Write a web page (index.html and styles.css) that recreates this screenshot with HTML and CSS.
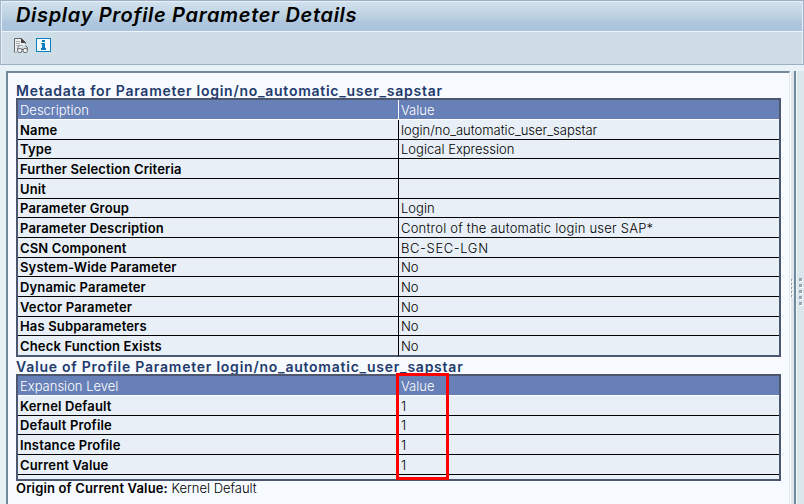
FILE: index.html
```html
<!DOCTYPE html>
<html lang="en">
<head>
<meta charset="utf-8">
<title>Display Profile Parameter Details</title>
<link rel="stylesheet" href="styles.css">
</head>
<body>
<header class="top">
  <h1 class="title">Display Profile Parameter Details</h1>
  <div class="toolbar">
    <svg class="ic-doc" width="15" height="16" viewBox="0 0 15 16" fill="none" stroke="#666">
      <path d="M.5 14.500V.5H7.500L11.500 4.500V6" fill="#edf1f4"/>
      <path d="M7 0v5h5z" fill="#444" stroke="none"/>
      <path d="M2 3.500h4M2 5.500h4M2 7.500h7M0 14.500h3" stroke="#aaa"/>
      <path d="M3.700 12V9.500L5.500 7.800M13.300 12V9L11.500 7.800M8 11.500h1"/>
      <circle cx="5.800" cy="12.500" r="2.200" fill="#f4f6f7"/>
      <circle cx="11.200" cy="12.500" r="2.200" fill="#f4f6f7"/>
    </svg>
    <svg class="ic-info" width="15" height="14" viewBox="0 0 15 14" shape-rendering="crispEdges">
      <rect width="15" height="14" fill="#0a7fc2"/>
      <rect x="1" y="1" width="13" height="12" fill="#f7fbfe"/>
      <path d="M6 2h3v2H6zM5 5h4v5h1v2H5v-2h1V6H5z" fill="#0a7fc2"/>
    </svg>
  </div>
</header>
<div class="work">
  <main class="panel">
    <h2 class="h-meta">Metadata for Parameter login/no_automatic_user_sapstar</h2>
    <div class="table">
      <div class="row head"><span>Description</span><span>Value</span></div>
      <div class="row"><b>Name</b><span>login/no_automatic_user_sapstar</span></div>
      <div class="row short"><b>Type</b><span>Logical Expression</span></div>
      <div class="row"><b>Further Selection Criteria</b><span></span></div>
      <div class="row"><b>Unit</b><span></span></div>
      <div class="row short"><b>Parameter Group</b><span>Login</span></div>
      <div class="row"><b>Parameter Description</b><span class="sentence">Control of the automatic login user SAP*</span></div>
      <div class="row"><b>CSN Component</b><span class="code">BC-SEC-LGN</span></div>
      <div class="row short"><b>System-Wide Parameter</b><span>No</span></div>
      <div class="row"><b>Dynamic Parameter</b><span>No</span></div>
      <div class="row"><b>Vector Parameter</b><span>No</span></div>
      <div class="row short"><b>Has Subparameters</b><span>No</span></div>
      <div class="row last"><b>Check Function Exists</b><span>No</span></div>
    </div>
    <h2 class="h-value">Value of Profile Parameter login/no_automatic_user_sapstar</h2>
    <div class="table values">
      <div class="row head"><span>Expansion Level</span><span>Value</span></div>
      <div class="row"><b>Kernel Default</b><span>1</span></div>
      <div class="row short"><b>Default Profile</b><span>1</span></div>
      <div class="row"><b>Instance Profile</b><span>1</span></div>
      <div class="row"><b>Current Value</b><span>1</span></div>
      <div class="row stub"><b></b><span></span></div>
      <div class="mark"></div>
    </div>
    <p class="origin"><b>Origin of Current Value:</b> <span>Kernel Default</span></p>
  </main>
  <div class="splitter"><i></i><i></i><i></i><i></i><i></i></div>
  <div class="edge"><i></i><i></i><i></i><i></i><i></i></div>
</div>
</body>
</html>
```
FILE: styles.css
```css
* { box-sizing: border-box; }
body {
  margin: 0;
  width: 804px;
  height: 504px;
  overflow: hidden;
  display: flex;
  flex-direction: column;
  background: #e8f1f6;
  color: #000;
  font: 300 13px/16px Inter, "Liberation Sans", Arial, sans-serif;
}
h1, h2, p { margin: 0; }

.top {
  height: 65px;
  border: 1px solid #9dafc5;
  border-left-color: #a5b7cc;
  box-shadow: inset 1px 1px #e8f0f6, inset -1px 0 #e8f0f6;
  background: #cfdde7;
}
.title {
  height: 31px;
  margin: 0 1px;
  padding: 2px 0 0 14px;
  border-top: 1px solid #e8f0f6;
  border-bottom: 1px solid #edf4f9;
  background: linear-gradient(#d2e1ee, #b5cddd 62%, #aec6df 66%, #abc3dc);
  font: italic 600 20px/23px Inter, "Liberation Sans", Arial, sans-serif;
  letter-spacing: .68px;
  white-space: nowrap;
}
.toolbar {
  display: flex;
  gap: 7px;
  padding: 6px 0 0 13px;
}

.work {
  flex: 1;
  display: flex;
  padding: 6px 0 0 6px;
}
.panel {
  width: 784px;
  padding: 11px 0 0 8px;
  border: solid;
  border-width: 2px 1px 0 2px;
  border-color: #71899b #e0e7eb #71899b #71899b;
  background: #f7fbff;
}
h2 {
  height: 14px;
  font-size: 14px;
  font-weight: 600;
  line-height: 14px;
  color: #233a6c;
  white-space: nowrap;
}
.h-meta { letter-spacing: .73px; }
.h-value { height: 17px; padding-top: 3px; letter-spacing: .76px; }

.table {
  width: 765px;
  border: 2px solid #4d566f;
  background: #e8eff6;
}
.values { position: relative; }
.row {
  display: grid;
  grid-template-columns: 380px 1fr;
  height: 20px;
  border-bottom: 1px solid #000;
  line-height: 20px;
}
.row > * { padding-left: 2px; white-space: nowrap; }
.row > :last-child { border-left: 1px solid #000; }
.head {
  background: #6780b7;
  color: #fff;
  border-color: #fff;
}
.head > :last-child { border-color: #fff; }
.short { height: 19px; line-height: 18px; }
.last { height: 19px; border: 0; }
.stub { height: 4px; border: 0; }
b { font-weight: 600; letter-spacing: .15px; }
.sentence { letter-spacing: .22px; }
.code { letter-spacing: .6px; }
.mark {
  position: absolute;
  left: 378px;
  top: -3px;
  width: 53px;
  height: 107px;
  border: 3px solid #f00;
}
.origin { line-height: 15px; white-space: nowrap; }

.splitter, .edge {
  display: flex;
  flex-direction: column;
  padding-top: 208px;
  gap: 2px;
}
.splitter {
  width: 6px;
  border-left: 1px solid #fff;
  border-right: 2px solid #71899b;
  background: #dce6ec;
}
.splitter i { width: 1px; height: 2px; background: #8d9cae; box-shadow: 1px 1px #fff; }
.edge {
  width: 8px;
  padding: 207px 0 0 2px;
  gap: 3px;
  border-left: 1px solid #f2f6f8;
  background: #dae6ec;
}
.edge i { width: 3px; height: 3px; background: #97a5b6; box-shadow: 1px 1px #fff; }
```
